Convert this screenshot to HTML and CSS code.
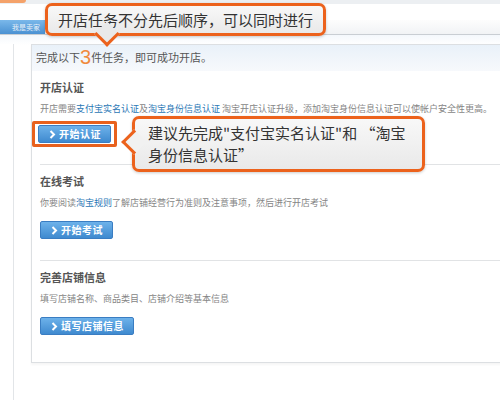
FILE: index.html
```html
<!DOCTYPE html>
<html>
  <head>
    <meta charset="utf-8" />
    <title>开店任务</title>
    <link rel="stylesheet" href="styles.css">
  </head>

  <body>
    <div class="page">
      <div class="topbar">
        <span class="logo"></span>
      </div>
      <div class="nav">
        <div class="nav-tab">我是卖家</div>
      </div>
      <div class="main">
        <div class="side"></div>
        <div class="content">
          <div class="box">
            <div class="box-head">
              完成以下<span class="num">3</span>件任务，即可成功开店。
            </div>

            <div class="task">
              <div class="task-title">开店认证</div>
              <div class="task-desc">
                开店需要<a href="#">支付宝实名认证</a>及<a href="#">淘宝身份信息认证</a>&nbsp;淘宝开店认证升级，添加淘宝身份信息认证可以使帐户安全性更高。
              </div>
              <div class="mark">
                <a class="btn" href="#">
                  <svg width="7" height="9" viewBox="0 0 7 9"><polyline points="1.5,1 5,4.5 1.5,8" fill="none" stroke="#fff" stroke-width="2" /></svg>
                  开始认证
                </a>
              </div>
            </div>

            <div class="task">
              <div class="task-title">在线考试</div>
              <div class="task-desc">
                你要阅读<a href="#">淘宝规则</a>了解店铺经营行为准则及注意事项，然后进行开店考试
              </div>
              <a class="btn" href="#">
                <svg width="7" height="9" viewBox="0 0 7 9"><polyline points="1.5,1 5,4.5 1.5,8" fill="none" stroke="#fff" stroke-width="2" /></svg>
                开始考试
              </a>
            </div>

            <div class="task task-last">
              <div class="task-title">完善店铺信息</div>
              <div class="task-desc">填写店铺名称、商品类目、店铺介绍等基本信息</div>
              <a class="btn" href="#">
                <svg width="7" height="9" viewBox="0 0 7 9"><polyline points="1.5,1 5,4.5 1.5,8" fill="none" stroke="#fff" stroke-width="2" /></svg>
                填写店铺信息
              </a>
            </div>
          </div>
        </div>
      </div>

      <!-- annotations laid over the page -->
      <div class="callout callout-top">开店任务不分先后顺序，可以同时进行</div>
      <div class="callout callout-side">
        建议先完成"支付宝实名认证"和 “淘宝<br />身份信息认证”
      </div>
    </div>
  </body>
</html>
```

FILE: styles.css
```css
* {
  box-sizing: border-box;
  font-family: 'Noto Sans CJK SC', 'Noto Sans', sans-serif;
}

html,
body {
  margin: 0;
  padding: 0;
  background-color: #fff;
  overflow: hidden;
}

a {
  color: #2a77b5;
  text-decoration: none;
}

.page {
  position: relative;
  width: 500px;
  height: 400px;
  overflow: hidden;
}

.topbar {
  height: 20px;
  border-top: 4px solid #eceff2;
  background-color: #fff;
}

.logo {
  display: block;
  width: 26px;
  height: 3px;
  margin-top: -4px;
  background-color: #f4a26a;
  border-radius: 0 0 6px 0;
}

.nav {
  height: 15px;
  border-bottom: 1px solid #c9ced3;
  background: linear-gradient(#fdfdfd, #f1f3f5);
}

.nav-tab {
  width: 45px;
  height: 14px;
  background: linear-gradient(#7ab8ea, #4a91d2);
  color: #e8f0f8;
  font-size: 7px;
  line-height: 14px;
  padding-left: 12px;
  white-space: nowrap;
  overflow: hidden;
}

.main {
  display: flex;
  height: 365px;
  background: linear-gradient(#f4f8fc, #fff 10px);
}

.side {
  width: 14px;
  flex-shrink: 0;
  margin-top: 9px;
  border-right: 1px solid #e2e5e8;
  background-color: #fff;
}

.content {
  padding: 9px 0 0 17px;
}

.box {
  width: 520px;
  border: 1px solid #dcdfe2;
  background-color: #fff;
  box-shadow: 0 2px 2px rgba(0, 0, 0, 0.04);
}

.box-head {
  height: 26px;
  padding-left: 4px;
  font-size: 11px;
  line-height: 25px;
  color: #555;
  background: linear-gradient(#e9f1f9, #f7f9fc);
}

.box-head .num {
  font-size: 20px;
  line-height: 20px;
  color: #f08a3c;
  font-family: 'Liberation Sans', sans-serif;
  vertical-align: -2px;
}

.task {
  margin: 0 0 0 8px;
  padding: 8px 0 21px;
  border-bottom: 1px solid #e1e3e5;
}

.task-last {
  border-bottom: 0;
  padding-bottom: 27px;
}

.task-title {
  height: 16px;
  font-size: 11px;
  font-weight: 700;
  line-height: 16px;
  color: #555;
  margin-bottom: 8px;
}

.task-desc {
  height: 12px;
  font-size: 9px;
  line-height: 12px;
  color: #858585;
  white-space: nowrap;
  margin-bottom: 12px;
}

.btn {
  display: flex;
  width: max-content;
  align-items: center;
  gap: 3px;
  height: 18px;
  padding: 0 9px 0 10px;
  border: 1px solid #3a7dc2;
  border-radius: 2px;
  background: linear-gradient(#6db2ea, #3f8acf);
  color: #fff;
  font-size: 10px;
  font-weight: 700;
  line-height: 16px;
  letter-spacing: 0.5px;
}

.mark {
  width: max-content;
  margin: -6px 0 -4px -8px;
  padding: 1px 3px;
  border: 3px solid #e8611d;
  border-radius: 2px;
}

.callout {
  position: absolute;
  border: 3px solid #ec621c;
  border-radius: 7px;
  background: linear-gradient(#f8f8f8, #e9e9e9);
  color: #333;
  font-size: 15px;
  box-shadow: 0 1px 3px rgba(0, 0, 0, 0.2);
}

.callout::after {
  content: '';
  position: absolute;
  width: 15px;
  height: 15px;
  background-color: #ebebeb;
  border: 3px solid #ec621c;
}

.callout-top {
  left: 45px;
  top: 3px;
  width: 281px;
  height: 33px;
  padding-left: 10px;
  line-height: 27px;
}

.callout-top::after {
  left: 50px;
  bottom: -10px;
  border-top: 0;
  border-left: 0;
  background-color: #e9e9e9;
  transform: rotate(45deg);
}

.callout-side {
  left: 132px;
  top: 116px;
  width: 293px;
  height: 56px;
  padding: 3px 0 0 13px;
  line-height: 22px;
}

.callout-side::after {
  left: -10px;
  top: 14px;
  border-top: 0;
  border-right: 0;
  background-color: #f1f1f1;
  transform: rotate(45deg);
}
```
